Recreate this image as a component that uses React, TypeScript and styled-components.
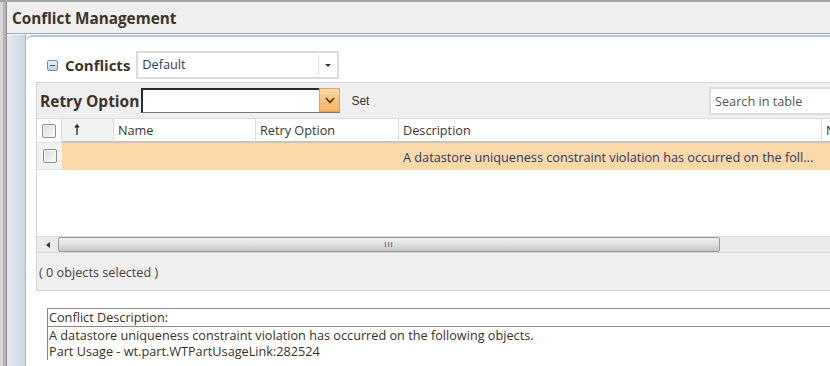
import React from "react";
import styled, { createGlobalStyle } from "styled-components";

const GlobalStyle = createGlobalStyle`
  html, body {
    margin: 0;
    padding: 0;
    background: #efefef;
  }
  body {
    font-family: "Open Sans", "Noto Sans", sans-serif;
    font-size: 12.7px;
    color: #3a3530;
  }
`;

const Screen = styled.div`
  width: 830px;
  height: 366px;
  overflow: hidden;
  display: flex;
  background: #efefef;
  border-top: 2px solid #a4a4a4;
  box-sizing: border-box;
`;

const Rail = styled.div`
  width: 7px;
  flex: none;
  background: linear-gradient(90deg, #d6d6d6 0, #d6d6d6 3px, #b4b4b4 3px, #b4b4b4 6px, #8a8a8a 6px);
`;

const Main = styled.div`
  flex: 1;
  display: flex;
  flex-direction: column;
  min-width: 0;
`;

const Header = styled.div`
  height: 31px;
  flex: none;
  display: flex;
  align-items: center;
  padding-left: 5px;
  font-size: 15.3px;
  font-weight: 700;
  color: #3d3328;
  border-bottom: 1px solid #a9a9a9;
  box-shadow: 0 1px 0 #f8f8f8;
  background: #efefef;
`;

const Body = styled.div`
  flex: 1;
  display: flex;
  min-height: 0;
  padding-top: 1px;
`;

const Frame = styled.div`
  width: 18px;
  flex: none;
  background: linear-gradient(90deg, #e6ebf0, #d4dee8 60%, #c9d3dd);
  border-right: 1px solid #b0b8c0;
`;

const Panel = styled.div`
  flex: 1;
  min-width: 0;
  background: #fff;
  border-top: 2px solid #b3c5d8;
  border-top-left-radius: 7px;
  padding-left: 10px;
  display: flex;
  flex-direction: column;
`;

const ConflictsRow = styled.div`
  height: 45px;
  flex: none;
  box-sizing: border-box;
  display: flex;
  align-items: center;
  padding: 11px 0 0 11px;
  gap: 7px;
`;

const ToggleIcon = styled.span`
  width: 9px;
  height: 9px;
  border: 1px solid #6d8fb3;
  border-radius: 2px;
  background: linear-gradient(#e9f1f9, #bcd0e6);
  display: flex;
  align-items: center;
  justify-content: center;
  &::after {
    content: "";
    width: 5px;
    height: 1px;
    background: #3c5a80;
  }
`;

const SectionTitle = styled.span`
  font-size: 15px;
  font-weight: 700;
  color: #3d3328;
  margin-right: -1px;
`;

const Dropdown = styled.div`
  width: 203px;
  height: 28px;
  box-sizing: border-box;
  border: 2px solid #dcdcdc;
  display: flex;
  align-items: center;
  background: #fff;
`;

const DropdownValue = styled.span`
  flex: 1;
  padding-left: 4px;
  color: #1f3d6c;
  margin-top: -3px;
`;

const DropdownArrow = styled.span`
  width: 18px;
  height: 20px;
  border-left: 1px solid #e0e0e0;
  display: flex;
  align-items: center;
  justify-content: center;
  &::after {
    content: "";
    border-left: 3px solid transparent;
    border-right: 3px solid transparent;
    border-top: 3px solid #1f3d6c;
  }
`;

const Grid = styled.div`
  border: 1px solid #d4d4d4;
  border-right: none;
  display: flex;
  flex-direction: column;
`;

const Toolbar = styled.div`
  height: 35px;
  display: flex;
  align-items: center;
  padding-left: 3px;
  background: #efefef;
  border-bottom: 1px solid #dadada;
`;

const ToolLabel = styled.span`
  font-size: 15.5px;
  font-weight: 700;
  color: #3d3328;
  margin-right: 2px;
`;

const Combo = styled.div`
  width: 199px;
  height: 25px;
  box-sizing: border-box;
  display: flex;
  background: #fff;
  border-top: 2px solid #2a2a2a;
  border-left: 2px solid #2a2a2a;
  border-bottom: 1px solid #7a7a7a;
`;

const ComboField = styled.div`
  flex: 1;
`;

const ComboButton = styled.div`
  width: 19px;
  display: flex;
  align-items: center;
  justify-content: center;
  background: linear-gradient(#fbd9a4, #f5b35f);
  border: 1px solid #e2a45a;
  margin-top: -2px;
`;

const SetButton = styled.span`
  font-family: "Liberation Sans", Arial, sans-serif;
  font-size: 12px;
  color: #333;
  margin-left: 11px;
`;

const Spacer = styled.div`
  flex: 1;
`;

const Search = styled.div`
  width: 121px;
  height: 28px;
  box-sizing: border-box;
  border: 2px solid #dcdcdc;
  border-right: none;
  background: #fff;
  display: flex;
  align-items: center;
  padding-left: 4px;
  color: #555;
`;

const HeadRow = styled.div`
  display: flex;
  height: 24px;
  background: #fff;
`;

const DataRow = styled.div`
  display: flex;
  height: 27px;
  background: #fbd8a8;
`;

const Cell = styled.div<{ $w: number; $head?: boolean; $shade?: boolean }>`
  width: ${(p) => p.$w}px;
  flex: none;
  box-sizing: border-box;
  display: flex;
  align-items: center;
  padding-left: 4px;
  white-space: nowrap;
  overflow: hidden;
  border-right: ${(p) => (p.$head ? "1px solid #dcdcdc" : "none")};
  border-bottom: ${(p) => (p.$head ? "2px solid #c4c4c4" : "none")};
  background: ${(p) => (p.$shade ? "#f2f2f2" : "transparent")};
`;

const BoxCell = styled(Cell)`
  justify-content: center;
  padding-left: 0;
  border-bottom: 1px solid #e2e2e2;
`;

const Check = styled.span`
  width: 12px;
  height: 12px;
  border: 1px solid #8e8e8e;
  border-radius: 2px;
  background: linear-gradient(135deg, #dadada, #fbfbfb);
  box-shadow: inset 0 0 0 1px #f6f6f6;
`;

const DescText = styled.span`
  color: #1f3a66;
`;

const Empty = styled.div`
  height: 66px;
  background: #fff;
`;

const ScrollBar = styled.div`
  height: 15px;
  display: flex;
  align-items: center;
  background: #eaeaea;
  border-top: 1px solid #dcdcdc;
  border-bottom: 1px solid #d6d6d6;
`;

const ScrollArrow = styled.span`
  width: 21px;
  display: flex;
  justify-content: center;
  &::after {
    content: "";
    border-top: 3px solid transparent;
    border-bottom: 3px solid transparent;
    border-right: 4px solid #333;
  }
`;

const Thumb = styled.div`
  width: 662px;
  height: 15px;
  box-sizing: border-box;
  border: 1px solid #9a9a9a;
  border-radius: 2px;
  background: linear-gradient(#f0f0f0, #e2e2e2 45%, #c6c6c6);
  display: flex;
  align-items: center;
  justify-content: center;
  font-family: "Liberation Sans", Arial, sans-serif;
  font-size: 8px;
  letter-spacing: 1px;
  color: #444;
`;

const Footer = styled.div`
  height: 37px;
  display: flex;
  align-items: center;
  padding-left: 2px;
  background: #efefef;
  color: #4a4038;
`;

const DescBox = styled.div`
  margin: 17px 0 0 11px;
  border-top: 1px solid #8a8a8a;
  border-left: 1px solid #8a8a8a;
  line-height: 16.5px;
  color: #3a3028;
`;

const DescTitle = styled.div`
  padding-left: 1px;
  border-bottom: 1px solid #8a8a8a;
`;

const DescLine = styled.div`
  padding-left: 1px;
`;

const columns = [
  { key: "name", label: "Name", w: 142 },
  { key: "retry", label: "Retry Option", w: 143 },
  { key: "desc", label: "Description", w: 423 },
  { key: "n", label: "N", w: 60 },
];

export default function App() {
  return (
    <>
      <GlobalStyle />
      <Screen>
        <Rail />
        <Main>
          <Header>Conflict Management</Header>
          <Body>
            <Frame />
            <Panel>
              <ConflictsRow>
                <ToggleIcon />
                <SectionTitle>Conflicts</SectionTitle>
                <Dropdown>
                  <DropdownValue>Default</DropdownValue>
                  <DropdownArrow />
                </Dropdown>
              </ConflictsRow>
              <Grid>
                <Toolbar>
                  <ToolLabel>Retry Option</ToolLabel>
                  <Combo>
                    <ComboField />
                    <ComboButton>
                      <svg width="10" height="7" viewBox="0 0 10 7">
                        <path d="M1 1 L5 5.5 L9 1" fill="none" stroke="#5a3a10" strokeWidth="1.8" />
                      </svg>
                    </ComboButton>
                  </Combo>
                  <SetButton>Set</SetButton>
                  <Spacer />
                  <Search>Search in table</Search>
                </Toolbar>
                <HeadRow>
                  <BoxCell $w={25} $head>
                    <Check />
                  </BoxCell>
                  <Cell $w={52} $head $shade style={{ paddingLeft: 12 }}>
                    <svg width="6" height="12" viewBox="0 0 6 12">
                      <path d="M3 1 V11 M1 3.5 L3 1 L5 3.5" fill="none" stroke="#222" strokeWidth="1.3" />
                    </svg>
                  </Cell>
                  {columns.map((c) => (
                    <Cell key={c.key} $w={c.w} $head>
                      {c.label}
                    </Cell>
                  ))}
                </HeadRow>
                <DataRow>
                  <BoxCell $w={25} $shade>
                    <Check />
                  </BoxCell>
                  <Cell $w={52} />
                  <Cell $w={142} />
                  <Cell $w={143} />
                  <Cell $w={423}>
                    <DescText>A datastore uniqueness constraint violation has occurred on the foll...</DescText>
                  </Cell>
                </DataRow>
                <Empty />
                <ScrollBar>
                  <ScrollArrow />
                  <Thumb>III</Thumb>
                </ScrollBar>
                <Footer>( 0 objects selected )</Footer>
              </Grid>
              <DescBox>
                <DescTitle>Conflict Description:</DescTitle>
                <DescLine>A datastore uniqueness constraint violation has occurred on the following objects.</DescLine>
                <DescLine>Part Usage - wt.part.WTPartUsageLink:282524</DescLine>
              </DescBox>
            </Panel>
          </Body>
        </Main>
      </Screen>
    </>
  );
}
